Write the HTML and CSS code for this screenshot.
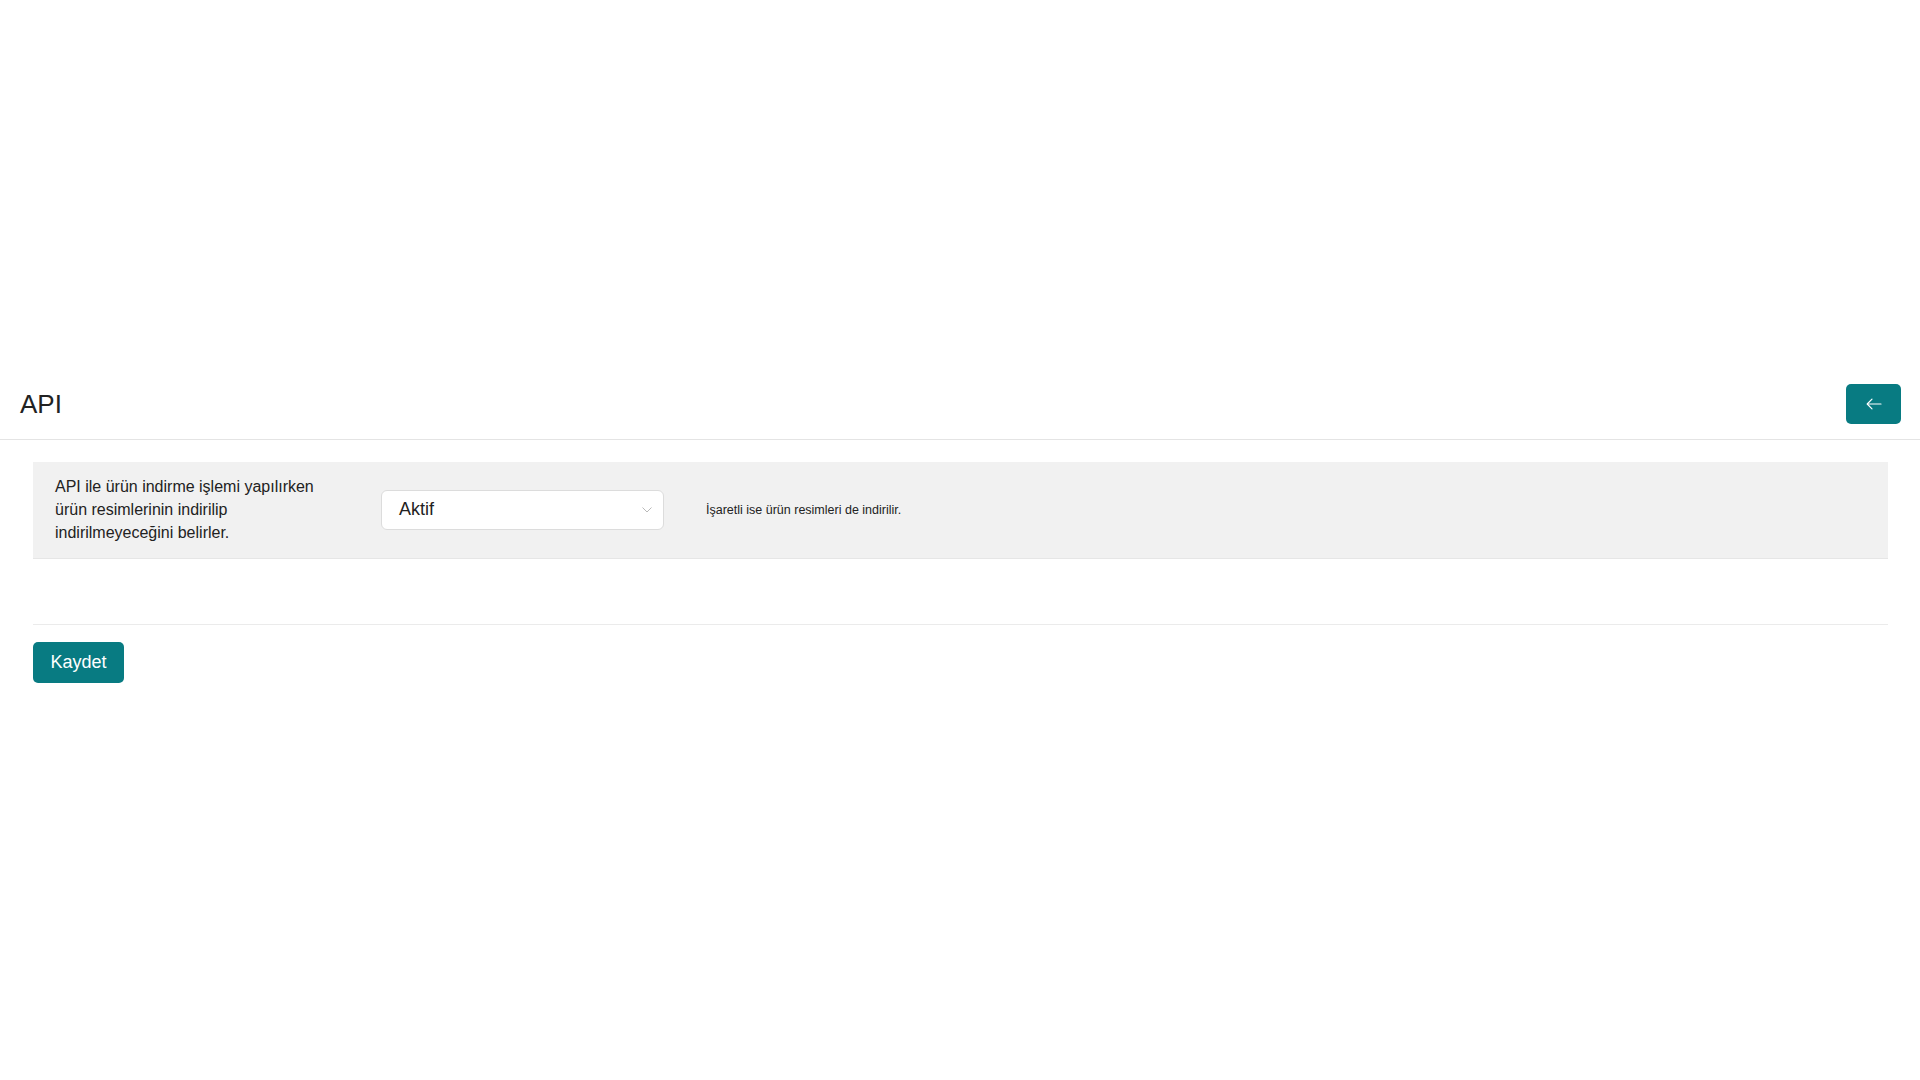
FILE: index.html
```html
<!DOCTYPE html>
<html lang="tr">
<head>
    <meta charset="utf-8">
    <title>API</title>
    <link rel="stylesheet" href="styles.css">
</head>
<body>
    <div class="topspace"></div>

    <div class="page-head">
        <h1 class="page-title">API</h1>
        <button class="btn btn-back" type="button" aria-label="Geri">
            <svg width="16" height="12" viewBox="0 0 16 12" fill="none" stroke="#fff" stroke-width="1.2" stroke-linecap="round" stroke-linejoin="round">
                <path d="M15 6H1.5"/>
                <path d="M6 1.2L1.2 6L6 10.8"/>
            </svg>
        </button>
    </div>

    <div class="content">
        <div class="setting-row">
            <div class="setting-label">
                API ile ürün indirme işlemi yapılırken ürün resimlerinin indirilip indirilmeyeceğini belirler.
            </div>
            <div class="setting-input">
                <div class="select">
                    <span class="select-value">Aktif</span>
                    <svg class="select-arrow" width="10" height="6" viewBox="0 0 10 6" fill="none" stroke="#b9b9b9" stroke-width="1">
                        <path d="M0.5 0.5L5 5L9.5 0.5"/>
                    </svg>
                </div>
            </div>
            <div class="setting-hint">İşaretli ise ürün resimleri de indirilir.</div>
        </div>

        <div class="form-footer">
            <button class="btn btn-save" type="button">Kaydet</button>
        </div>
    </div>
</body>
</html>
```

FILE: styles.css
```css
body {
    margin: 0;
    padding: 0;
    font-family: "Liberation Sans", Arial, sans-serif;
    color: #1f1f1f;
    background-color: #fff;
}

.topspace {
    height: 369px;
}

.page-head {
    display: flex;
    justify-content: space-between;
    align-items: center;
    padding: 15px 19px 15px 20px;
    border-bottom: 1px solid #e4e4e4;
}

.page-title {
    margin: 0;
    font-size: 26px;
    font-weight: normal;
    color: #222;
}

.btn {
    border: none;
    cursor: pointer;
    background-color: #087b82;
    color: #fff;
    font-family: "Liberation Sans", Arial, sans-serif;
}

.btn-back {
    display: flex;
    align-items: center;
    justify-content: center;
    width: 55px;
    height: 40px;
    border-radius: 5px;
}

.content {
    padding: 22px 32px 0 33px;
}

.setting-row {
    display: grid;
    grid-template-columns: 326px 283px auto;
    align-items: center;
    padding: 13px 22px 14px 22px;
    background-color: #f1f1f1;
    border-bottom: 1px solid #e6e6e6;
}

.setting-label {
    font-size: 16px;
    line-height: 23px;
    color: #222;
    padding-right: 50px;
}

.select {
    display: flex;
    justify-content: space-between;
    align-items: center;
    height: 38px;
    padding: 0 11px 0 17px;
    background-color: #fff;
    border: 1px solid #dcdcdc;
    border-radius: 6px;
}

.select-value {
    font-size: 18px;
    color: #222;
}

.setting-hint {
    padding-left: 42px;
    font-size: 12.5px;
    color: #222;
}

.form-footer {
    margin-top: 65px;
    padding-top: 17px;
    border-top: 1px solid #ebebeb;
}

.btn-save {
    width: 91px;
    height: 41px;
    border-radius: 5px;
    font-size: 18px;
}
```
